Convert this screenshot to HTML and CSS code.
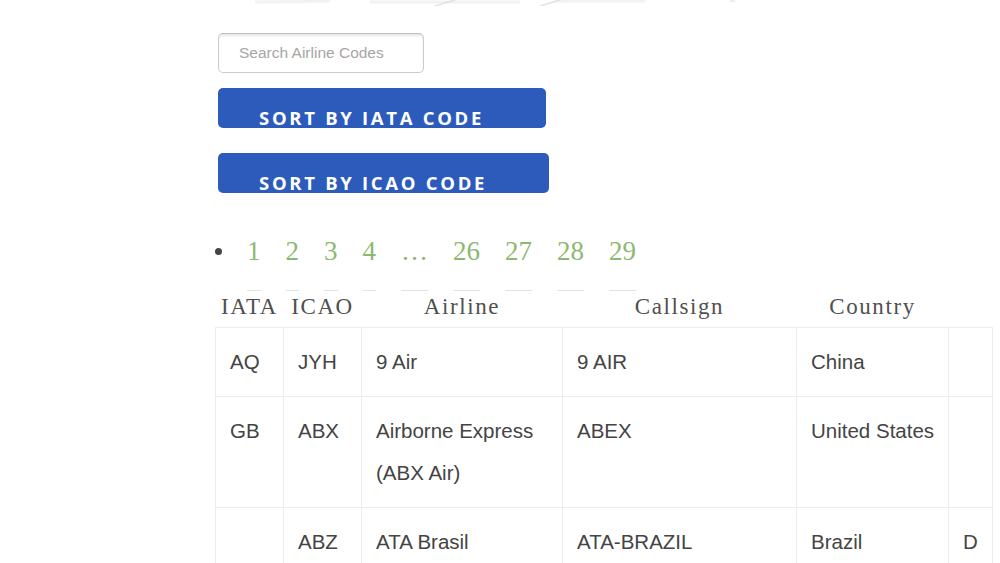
FILE: index.html
```html
<!DOCTYPE html>
<html lang="en">
<head>
<meta charset="utf-8">
<title>Airline Codes</title>
<link rel="stylesheet" href="styles.css">
</head>
<body>
<div class="page">
  <svg class="hero" width="490" height="6" viewBox="0 0 490 6" aria-hidden="true">
    <path d="M0 2 L75 1 M115 2 L265 2 M300 1 L390 1" stroke="#f2f2f2" stroke-width="3" fill="none"/>
    <path d="M180 6 L200 0 M285 6 L305 0" stroke="#e2e2e2" stroke-width="1.5" fill="none"/>
    <path d="M475 1 L480 1" stroke="#eeeeee" stroke-width="2" fill="none"/>
  </svg>
  <input class="search" type="text" placeholder="Search Airline Codes">
  <div class="actions">
    <button class="sort-btn" type="button">Sort by IATA code</button>
    <button class="sort-btn" type="button">Sort by ICAO code</button>
  </div>
  <ul class="pager">
    <li class="pager-dot"></li>
    <li><a href="#">1</a></li>
    <li><a href="#">2</a></li>
    <li><a href="#">3</a></li>
    <li><a href="#">4</a></li>
    <li><a href="#">…</a></li>
    <li><a href="#">26</a></li>
    <li><a href="#">27</a></li>
    <li><a href="#">28</a></li>
    <li><a href="#">29</a></li>
  </ul>
  <table class="codes">
    <colgroup>
      <col class="w-iata"><col class="w-icao"><col class="w-airline"><col class="w-callsign"><col class="w-country"><col class="w-extra">
    </colgroup>
    <thead>
      <tr><th>IATA</th><th>ICAO</th><th>Airline</th><th>Callsign</th><th>Country</th><th></th></tr>
    </thead>
    <tbody>
      <tr><td>AQ</td><td>JYH</td><td>9 Air</td><td>9 AIR</td><td>China</td><td></td></tr>
      <tr><td>GB</td><td>ABX</td><td>Airborne Express (ABX Air)</td><td>ABEX</td><td>United States</td><td></td></tr>
      <tr><td></td><td>ABZ</td><td>ATA Brasil</td><td>ATA-BRAZIL</td><td>Brazil</td><td>D</td></tr>
    </tbody>
  </table>
</div>
</body>
</html>
```

FILE: styles.css
```css
html, body {
  margin: 0;
  padding: 0;
  background: #ffffff;
}

body {
  font-family: "Liberation Sans", Arial, sans-serif;
  color: #444444;
  overflow: hidden;
}

.page {
  padding-left: 218px;
}

.hero {
  display: block;
  margin-left: 37px;
}

.search {
  display: block;
  box-sizing: border-box;
  width: 206px;
  height: 40px;
  margin-top: 27px;
  padding: 0 20px;
  border: 1px solid #cccccc;
  border-top-color: #bdbdbd;
  border-radius: 5px;
  box-shadow: inset 0 2px 2px rgba(0, 0, 0, 0.09);
  font-family: "Liberation Sans", Arial, sans-serif;
  font-size: 15.5px;
  color: #444444;
  outline: none;
}

.search::placeholder {
  color: #a6a6a6;
}

.actions {
  display: flex;
  flex-direction: column;
  align-items: flex-start;
  gap: 25px;
  margin-top: 15px;
}

.sort-btn {
  box-sizing: border-box;
  height: 40px;
  margin: 0;
  padding: 18px 62px 0 41px;
  border: 0;
  border-radius: 5px;
  background: #2c5bbb;
  color: #ffffff;
  font-family: "Open Sans", sans-serif;
  font-weight: 700;
  font-size: 18.5px;
  line-height: 24px;
  letter-spacing: 2.7px;
  text-transform: uppercase;
  text-align: left;
  white-space: nowrap;
  overflow: visible;
}

.pager {
  display: flex;
  align-items: flex-start;
  list-style: none;
  margin: 42px 0 0 0;
  padding: 0;
  gap: 25px;
}

.pager-dot {
  width: 7px;
  height: 7px;
  margin: 13px 0 0 -3px;
  border-radius: 50%;
  background: #444444;
}

.pager a {
  display: block;
  padding-bottom: 23px;
  border-bottom: 1px solid #e3e3e3;
  font-family: "Liberation Serif", "Times New Roman", serif;
  font-size: 27px;
  line-height: 32px;
  color: #8cb96f;
  text-decoration: none;
}

.codes {
  table-layout: fixed;
  width: 777px;
  margin: 1px 0 0 -3px;
  border-collapse: collapse;
}

.w-iata { width: 68px; }
.w-icao { width: 78px; }
.w-airline { width: 201px; }
.w-callsign { width: 234px; }
.w-country { width: 152px; }
.w-extra { width: 44px; }

.codes th {
  padding: 0 0 5px;
  font-family: "Liberation Serif", "Times New Roman", serif;
  font-weight: 400;
  font-size: 23px;
  line-height: 30px;
  letter-spacing: 1.6px;
  color: #505050;
  text-align: center;
}

.codes td {
  padding: 13px 8px 13px 14px;
  border: 1px solid #ececec;
  font-size: 20.5px;
  line-height: 42px;
  color: #444444;
  vertical-align: top;
  white-space: normal;
}
```
